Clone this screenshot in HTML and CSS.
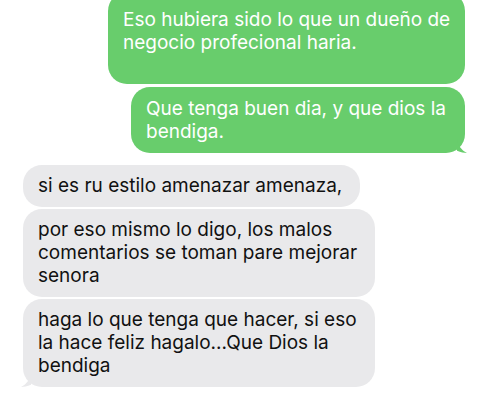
FILE: index.html
```html
<!DOCTYPE html>
<html lang="es">
<head>
    <meta charset="UTF-8">
    <meta name="viewport" content="width=device-width, initial-scale=1.0">
    <title>Mensajes</title>
    <link rel="stylesheet" href="styles.css">
</head>
<body>

    <div id="thread">
        <div class="bubble sent first">
            Eso hubiera sido lo que un dueño de<br>negocio profecional haria.
        </div>
        <div class="bubble sent tail">
            Que tenga buen dia, y que dios la<br>bendiga.
            <svg class="tail-icon" width="14" height="14" viewBox="0 0 14 14"><path d="M0 0 C1 6 4 11 10 14 C6 14 2 13 -4 10 Z" fill="#68cd6c"/></svg>
        </div>

        <div class="bubble received gap">
            si es ru estilo amenazar amenaza,
        </div>
        <div class="bubble received">
            por eso mismo lo digo, los malos<br>comentarios se toman pare mejorar<br>senora
        </div>
        <div class="bubble received tail">
            haga lo que tenga que hacer, si eso<br>la hace feliz hagalo...Que Dios la<br>bendiga
            <svg class="tail-icon" width="14" height="14" viewBox="0 0 14 14"><path d="M14 0 C13 6 10 11 4 14 C8 14 12 13 18 10 Z" fill="#e9e9eb"/></svg>
        </div>
    </div>

</body>
</html>
```

FILE: styles.css
```css
body, html {
    margin: 0;
    padding: 0;
    height: 100%;
    overflow: hidden;
    background: #ffffff;
    font-family: Inter, "Liberation Sans", Arial, sans-serif;
}

#thread {
    display: flex;
    flex-direction: column;
    gap: 3px;
    padding: 0 23px;
}

.bubble {
    position: relative;
    box-sizing: border-box;
    font-size: 19px;
    line-height: 23px;
    padding: 10px 18px 10px 15px;
    border-radius: 19px;
    white-space: nowrap;
}

.sent {
    align-self: flex-end;
    background: #68cd6c;
    color: #ffffff;
}

.received {
    align-self: flex-start;
    background: #e9e9eb;
    color: #111111;
    padding-top: 9px;
    margin-bottom: -1px;
}

.first {
    margin-top: -8px;
    padding: 16px 15px 30px;
    width: 357px;
}

.sent.tail {
    width: 334px;
}

.gap {
    margin-top: 9px;
}

.tail-icon {
    position: absolute;
    bottom: 0;
}

.sent .tail-icon {
    right: -6px;
}

.received .tail-icon {
    left: -6px;
}
```
